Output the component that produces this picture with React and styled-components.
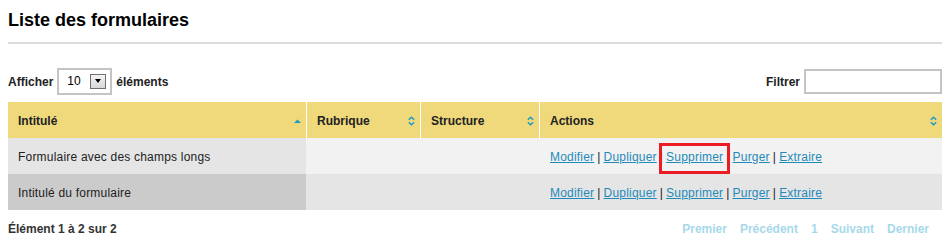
import React from "react";
import styled, { createGlobalStyle } from "styled-components";

const GlobalStyle = createGlobalStyle`
  body {
    margin: 8px;
    background: #ffffff;
    font-family: Arial, "Liberation Sans", sans-serif;
    font-size: 12px;
    color: #222;
  }
`;

const Page = styled.div`
  width: 934px;
`;

const Title = styled.h1`
  margin: 0;
  padding-top: 1px;
  font-size: 18px;
  line-height: 22px;
  font-weight: bold;
  color: #000;
`;

const Rule = styled.div`
  margin-top: 11px;
  height: 2px;
  background: #dddddd;
`;

const Toolbar = styled.div`
  margin-top: 23px;
  height: 28px;
  display: flex;
  align-items: center;
  justify-content: space-between;
`;

const ToolGroup = styled.div`
  display: flex;
  align-items: center;
  gap: 4px;
  padding-top: 1px;
  font-weight: bold;
  color: #222;
`;

const FakeSelect = styled.div`
  box-sizing: border-box;
  width: 55px;
  height: 27px;
  margin-top: -1px;
  border: 2px solid #c4c4c4;
  display: flex;
  align-items: center;
  justify-content: space-between;
  padding: 0 4px 0 8px;
  font-weight: normal;
  color: #000;
`;

const DropButton = styled.span`
  box-sizing: border-box;
  width: 16px;
  height: 15px;
  border: 1px solid #707070;
  background: linear-gradient(#f4f4f4, #d8d8d8);
  display: flex;
  align-items: center;
  justify-content: center;
  &::after {
    content: "";
    border-left: 3.5px solid transparent;
    border-right: 3.5px solid transparent;
    border-top: 4px solid #000;
  }
`;

const SearchInput = styled.input`
  box-sizing: border-box;
  width: 138px;
  height: 25px;
  border: 2px solid #c4c4c4;
  margin: -1px 0 0 0;
  padding: 0 4px;
  font-family: inherit;
  font-size: 12px;
  outline: none;
`;

const Table = styled.div`
  margin-top: 7px;
  display: grid;
  grid-template-columns: 298px 114px 119px 1fr;
`;

const HeadCell = styled.div`
  height: 36px;
  box-sizing: border-box;
  background: #efd97b;
  display: flex;
  align-items: center;
  justify-content: space-between;
  padding: 2px 5px 0 10px;
  font-weight: bold;
  color: #222;
  border-left: ${(p) => (p.$first ? "none" : "1px solid #ffffff")};
`;

const Cell = styled.div`
  height: 36px;
  box-sizing: border-box;
  display: flex;
  align-items: center;
  padding-top: 2px;
  padding-left: ${(p) => (p.$first ? "10px" : "11px")};
  background: ${(p) => p.$bg};
  color: #222;
  letter-spacing: 0.2px;
`;

const ActionLink = styled.a`
  position: relative;
  color: #1f8ab9;
  text-decoration: underline;
  cursor: pointer;
`;

const Highlight = styled.span`
  position: absolute;
  left: -7px;
  right: -7px;
  top: -7px;
  bottom: -10px;
  border: 3px solid #ec1c24;
  pointer-events: none;
`;

const Sep = styled.span`
  color: #222;
  margin: 0 3px;
`;

const Footer = styled.div`
  padding-top: 11px;
  display: flex;
  justify-content: space-between;
  align-items: center;
  line-height: 16px;
`;

const Info = styled.div`
  font-weight: bold;
  color: #333;
`;

const Pager = styled.div`
  display: flex;
  gap: 13px;
  padding-right: 13px;
  font-weight: bold;
  color: #a7d9ea;
`;

const SortAsc = () => (
  <svg width="7" height="10" viewBox="0 0 7 10">
    <path d="M0 7 L3.5 3.5 L7 7 Z" fill="#1a9cc8" />
  </svg>
);

const SortBoth = () => (
  <svg width="7" height="10" viewBox="0 0 7 10">
    <path
      d="M0.8 3.8 L3.5 1.2 L6.2 3.8 M0.8 6.2 L3.5 8.8 L6.2 6.2"
      fill="none"
      stroke="#1a9cc8"
      strokeWidth="1.5"
    />
  </svg>
);

const actions = ["Modifier", "Dupliquer", "Supprimer", "Purger", "Extraire"];

const rows = [
  { title: "Formulaire avec des champs longs", first: "#e5e5e5", rest: "#f2f2f2", highlight: "Supprimer" },
  { title: "Intitulé du formulaire", first: "#cbcbcb", rest: "#e5e5e5", highlight: null },
];

export default function App() {
  return (
    <Page>
      <GlobalStyle />
      <Title>Liste des formulaires</Title>
      <Rule />
      <Toolbar>
        <ToolGroup>
          Afficher
          <FakeSelect>
            10
            <DropButton />
          </FakeSelect>
          éléments
        </ToolGroup>
        <ToolGroup>
          Filtrer
          <SearchInput type="text" />
        </ToolGroup>
      </Toolbar>
      <Table>
        <HeadCell $first>
          Intitulé <SortAsc />
        </HeadCell>
        <HeadCell>
          Rubrique <SortBoth />
        </HeadCell>
        <HeadCell>
          Structure <SortBoth />
        </HeadCell>
        <HeadCell>
          Actions <SortBoth />
        </HeadCell>
        {rows.map((r) => (
          <React.Fragment key={r.title}>
            <Cell $first $bg={r.first}>{r.title}</Cell>
            <Cell $bg={r.rest} />
            <Cell $bg={r.rest} />
            <Cell $bg={r.rest}>
              {actions.map((a, i) => (
                <React.Fragment key={a}>
                  {i > 0 && <Sep>|</Sep>}
                  <ActionLink>
                    {a}
                    {r.highlight === a && <Highlight />}
                  </ActionLink>
                </React.Fragment>
              ))}
            </Cell>
          </React.Fragment>
        ))}
      </Table>
      <Footer>
        <Info>Élément 1 à 2 sur 2</Info>
        <Pager>
          <span>Premier</span>
          <span>Précédent</span>
          <span>1</span>
          <span>Suivant</span>
          <span>Dernier</span>
        </Pager>
      </Footer>
    </Page>
  );
}
